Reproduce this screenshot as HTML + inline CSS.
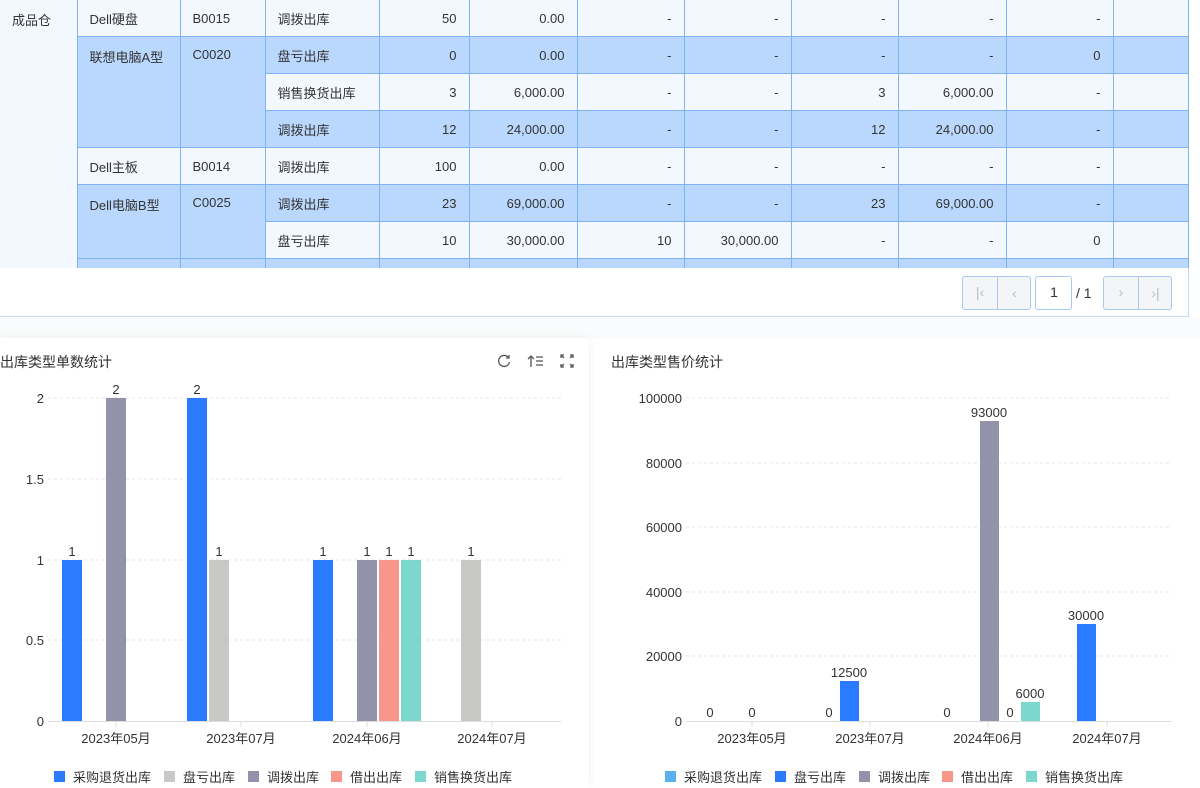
<!DOCTYPE html>
<html><head><meta charset="utf-8"><style>
*{margin:0;padding:0;box-sizing:border-box}
body{width:1200px;height:788px;overflow:hidden;background:#fff;font-family:"Liberation Sans","Noto Sans CJK SC",sans-serif;color:#333;position:relative}
.tw{position:absolute;left:0;top:0;width:1189px;height:268px;overflow:hidden;background:#f3f8ff}
table{position:absolute;top:-1px;left:0;border-collapse:collapse;table-layout:fixed;width:1188px;font-size:13px}
td{height:37px;border:1px solid #80b2f6;padding:0 12px;white-space:nowrap;vertical-align:middle}
td.r{text-align:right}
td.t{vertical-align:top;padding-top:10px}
tr.h td{background:#bad8fd}
td.w{background:#f3f8ff!important;border:none;border-right:1px solid #80b2f6}
.pg{position:absolute;left:0;top:268px;width:1189px;height:49px;border-bottom:1px solid #c5dbfb;border-right:1px solid #c5dbfb}
.btn{position:absolute;top:8px;height:34px;border:1px solid #a9c9f5;border-radius:3px;background:#f4f5f7;color:#bbb;font-size:14px}
.btn span{position:absolute;top:7px;width:34px;text-align:center}
.gap{position:absolute;left:0;top:317px;width:1200px;height:22px;background:#fafbfc}
.card{position:absolute;left:0;top:338px;width:589px;height:450px;background:#fff;box-shadow:0 0 8px rgba(0,0,0,.06)}
</style></head><body>
<div class="tw"><table>
<colgroup><col style="width:77px"><col style="width:103px"><col style="width:85px"><col style="width:114px"><col style="width:90px"><col style="width:108px"><col style="width:107px"><col style="width:107px"><col style="width:107px"><col style="width:108px"><col style="width:107px"><col style="width:75px"></colgroup>
<tr><td class="w t" rowspan="8">成品仓</td><td>Dell硬盘</td><td>B0015</td><td>调拨出库</td><td class="r">50</td><td class="r">0.00</td><td class="r">-</td><td class="r">-</td><td class="r">-</td><td class="r">-</td><td class="r">-</td><td></td></tr>
<tr class="h"><td class="t" rowspan="3">联想电脑A型</td><td class="t" rowspan="3">C0020</td><td>盘亏出库</td><td class="r">0</td><td class="r">0.00</td><td class="r">-</td><td class="r">-</td><td class="r">-</td><td class="r">-</td><td class="r">0</td><td></td></tr>
<tr><td>销售换货出库</td><td class="r">3</td><td class="r">6,000.00</td><td class="r">-</td><td class="r">-</td><td class="r">3</td><td class="r">6,000.00</td><td class="r">-</td><td></td></tr>
<tr class="h"><td>调拨出库</td><td class="r">12</td><td class="r">24,000.00</td><td class="r">-</td><td class="r">-</td><td class="r">12</td><td class="r">24,000.00</td><td class="r">-</td><td></td></tr>
<tr><td>Dell主板</td><td>B0014</td><td>调拨出库</td><td class="r">100</td><td class="r">0.00</td><td class="r">-</td><td class="r">-</td><td class="r">-</td><td class="r">-</td><td class="r">-</td><td></td></tr>
<tr class="h"><td class="t" rowspan="2" style="background:#bad8fd">Dell电脑B型</td><td class="t" rowspan="2" style="background:#bad8fd">C0025</td><td>调拨出库</td><td class="r">23</td><td class="r">69,000.00</td><td class="r">-</td><td class="r">-</td><td class="r">23</td><td class="r">69,000.00</td><td class="r">-</td><td></td></tr>
<tr><td>盘亏出库</td><td class="r">10</td><td class="r">30,000.00</td><td class="r">10</td><td class="r">30,000.00</td><td class="r">-</td><td class="r">-</td><td class="r">0</td><td></td></tr>
<tr class="h"><td></td><td></td><td></td><td></td><td></td><td></td><td></td><td></td><td></td><td></td><td></td></tr>
</table></div>
<div class="pg">
<div class="btn" style="left:962px;width:69px"><span style="left:0">|‹</span><span style="left:34px;border-left:1px solid #a9c9f5;top:0;height:32px;line-height:32px">‹</span></div>
<div class="btn" style="left:1035px;width:37px;background:#fff;color:#333"><span style="left:1px">1</span></div>
<div style="position:absolute;left:1076px;top:17px;font-size:14px;color:#333">/ 1</div>
<div class="btn" style="left:1103px;width:69px"><span style="left:0">›</span><span style="left:34px;border-left:1px solid #a9c9f5;top:0;height:32px;line-height:32px">›|</span></div>
</div>
<div class="gap"></div>
<div class="card"></div>
<svg style="position:absolute;left:0;top:0" width="1200" height="788" font-family="Liberation Sans,Noto Sans CJK SC,sans-serif">
<g font-size="14" fill="#333"><text x="0" y="367">出库类型单数统计</text><text x="611" y="367">出库类型售价统计</text></g>
<g fill="none" stroke="#555" stroke-width="1.3">
<path d="M508 357a5.5 5.5 0 1 0 1.5 5M509 355v3h-3"/>
<path d="M531 367v-11M528 359l3-3 3 3M536 357h7M536 361h7M536 365h7"/>
<path d="M561 358v-3h3M570 355h3v3M573 364v3h-3M564 367h-3v-3M561 355l3 3M573 355l-3 3M573 367l-3-3M561 367l3-3"/>
</g>
<g stroke="#e6e6e6" stroke-dasharray="3,3"><line x1="48" y1="398" x2="561" y2="398"/><line x1="48" y1="479" x2="561" y2="479"/><line x1="48" y1="560" x2="561" y2="560"/><line x1="48" y1="640" x2="561" y2="640"/>
<line x1="686" y1="398" x2="1172" y2="398"/><line x1="686" y1="463" x2="1172" y2="463"/><line x1="686" y1="527" x2="1172" y2="527"/><line x1="686" y1="592" x2="1172" y2="592"/><line x1="686" y1="656" x2="1172" y2="656"/></g>
<g stroke="#ddd"><line x1="48" y1="721.5" x2="561" y2="721.5"/><line x1="116" y1="721" x2="116" y2="727"/><line x1="241" y1="721" x2="241" y2="727"/><line x1="367" y1="721" x2="367" y2="727"/><line x1="492" y1="721" x2="492" y2="727"/>
<line x1="686" y1="721.5" x2="1172" y2="721.5"/><line x1="752" y1="721" x2="752" y2="727"/><line x1="870" y1="721" x2="870" y2="727"/><line x1="988" y1="721" x2="988" y2="727"/><line x1="1107" y1="721" x2="1107" y2="727"/></g>
<g font-size="13" fill="#333" text-anchor="end"><text x="44" y="403">2</text><text x="44" y="484">1.5</text><text x="44" y="565">1</text><text x="44" y="645">0.5</text><text x="44" y="726">0</text>
<text x="682" y="403">100000</text><text x="682" y="468">80000</text><text x="682" y="532">60000</text><text x="682" y="597">40000</text><text x="682" y="661">20000</text><text x="682" y="726">0</text></g>
<g font-size="13" fill="#333" text-anchor="middle"><text x="116" y="743">2023年05月</text><text x="241" y="743">2023年07月</text><text x="367" y="743">2024年06月</text><text x="492" y="743">2024年07月</text>
<text x="752" y="743">2023年05月</text><text x="870" y="743">2023年07月</text><text x="988" y="743">2024年06月</text><text x="1107" y="743">2024年07月</text></g>
<rect x="62" y="560" width="20" height="161" fill="#2a7bff"/><rect x="106" y="398" width="20" height="323" fill="#9293ab"/>
<rect x="187" y="398" width="20" height="323" fill="#2a7bff"/><rect x="209" y="560" width="20" height="161" fill="#c8c9c7"/>
<rect x="313" y="560" width="20" height="161" fill="#2a7bff"/><rect x="357" y="560" width="20" height="161" fill="#9293ab"/><rect x="379" y="560" width="20" height="161" fill="#f8968a"/><rect x="401" y="560" width="20" height="161" fill="#7cd7cf"/>
<rect x="461" y="560" width="20" height="161" fill="#c8c9c7"/>
<g font-size="13" fill="#333" text-anchor="middle"><text x="72" y="556">1</text><text x="116" y="394">2</text><text x="197" y="394">2</text><text x="219" y="556">1</text><text x="323" y="556">1</text><text x="367" y="556">1</text><text x="389" y="556">1</text><text x="411" y="556">1</text><text x="471" y="556">1</text>
<text x="710" y="717">0</text><text x="752" y="717">0</text><text x="829" y="717">0</text><text x="849" y="677">12500</text><text x="947" y="717">0</text><text x="989" y="417">93000</text><text x="1010" y="717">0</text><text x="1030" y="698">6000</text><text x="1086" y="620">30000</text></g>
<rect x="840" y="681" width="19" height="40" fill="#2a7bff"/><rect x="980" y="421" width="19" height="300" fill="#9293ab"/><rect x="1021" y="702" width="19" height="19" fill="#7cd7cf"/><rect x="1077" y="624" width="19" height="97" fill="#2a7bff"/>
<g font-size="13" fill="#333">
<rect x="54" y="771" width="11" height="11" fill="#2a7bff"/><text x="73" y="782">采购退货出库</text>
<rect x="164" y="771" width="11" height="11" fill="#c8c9c7"/><text x="183" y="782">盘亏出库</text>
<rect x="248" y="771" width="11" height="11" fill="#9293ab"/><text x="267" y="782">调拨出库</text>
<rect x="331" y="771" width="11" height="11" fill="#f8968a"/><text x="350" y="782">借出出库</text>
<rect x="415" y="771" width="11" height="11" fill="#7cd7cf"/><text x="434" y="782">销售换货出库</text>
<rect x="665" y="771" width="11" height="11" fill="#5bb0f0"/><text x="684" y="782">采购退货出库</text>
<rect x="775" y="771" width="11" height="11" fill="#2a7bff"/><text x="794" y="782">盘亏出库</text>
<rect x="859" y="771" width="11" height="11" fill="#9293ab"/><text x="878" y="782">调拨出库</text>
<rect x="942" y="771" width="11" height="11" fill="#f8968a"/><text x="961" y="782">借出出库</text>
<rect x="1026" y="771" width="11" height="11" fill="#7cd7cf"/><text x="1045" y="782">销售换货出库</text>
</g>
</svg>
</body></html>
